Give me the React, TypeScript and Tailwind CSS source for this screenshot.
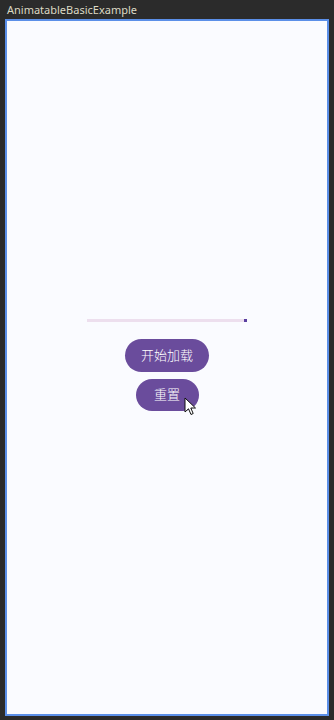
import React from "react"

function Cursor() {
  return (
    <svg width="13" height="19" viewBox="0 0 13 19" className="absolute left-[48px] top-[18px]">
      <path d="M1 1 L1 15 L4.5 11.8 L7 17.5 L9.2 16.5 L6.8 11 L11.5 11 Z" fill="#ffffff" stroke="#111111" strokeWidth="1" strokeLinejoin="round" />
    </svg>
  )
}

export default function App() {
  return (
    <div className="h-[720px] w-[334px] bg-[#2b2b2b] flex flex-col" style={{ fontFamily: '"Noto Sans", "Noto Sans CJK SC", sans-serif' }}>
      <div className="h-[19px] px-[7px] flex items-center text-[11px] leading-none text-[#dcd9c4]">
        AnimatableBasicExample
      </div>
      <div className="flex-1 mx-[5px] mb-[4px] pb-[5px] border-2 border-[#5b8fe8] bg-[#fafbff] flex flex-col items-center justify-center">
        <div className="w-[160px] h-[3px] bg-[#eddfee] flex justify-end">
          <div className="w-[3px] h-[3px] bg-[#5a3fa0]" />
        </div>
        <button className="mt-[17px] w-[84px] h-[33px] rounded-full bg-[#6a4c9c] text-white text-[13px] font-light">
          开始加载
        </button>
        <div className="relative mt-[7px]">
          <button className="w-[63px] h-[32px] rounded-full bg-[#6a4c9c] text-white text-[13px] font-light">
            重置
          </button>
          <Cursor />
        </div>
      </div>
    </div>
  )
}
